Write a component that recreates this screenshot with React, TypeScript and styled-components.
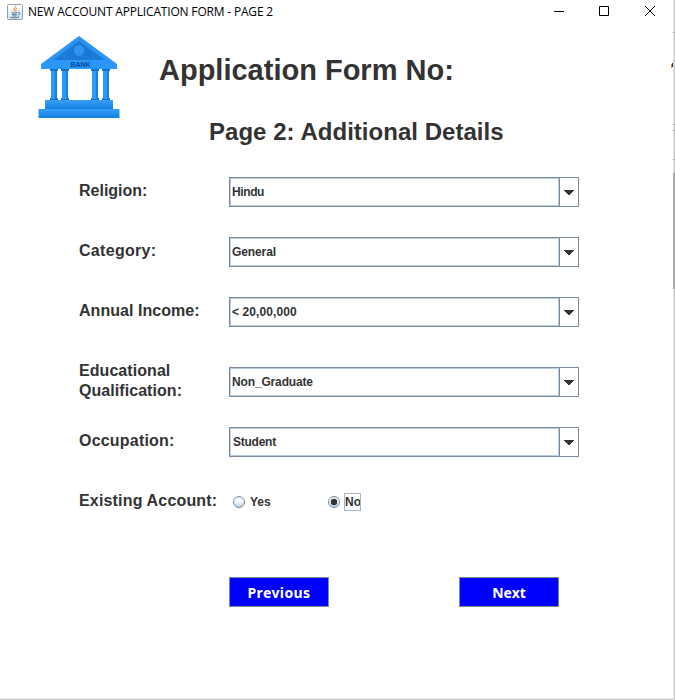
import React, { useState } from "react";
import styled, { createGlobalStyle } from "styled-components";

const GlobalStyle = createGlobalStyle`
  * { box-sizing: border-box; }
  body { margin: 0; background: #fff; overflow: hidden; }
`;

const Window = styled.div`
  position: relative;
  width: 675px;
  height: 700px;
  background: #fff;
  color: #333;
  font-family: "Liberation Sans", Arial, sans-serif;
  font-weight: 700;
  border-bottom: 1px solid #c1c1c1;
  box-shadow: inset 0 -1px #f1f1f1;
`;

const TitleBar = styled.header`
  display: flex;
  align-items: center;
  height: 24px;
  padding-left: 7px;
  color: #000;
`;

const WindowTitle = styled.span`
  margin: 0 auto 0 5px;
  font: 400 12px/16px "Open Sans", "Noto Sans", sans-serif;
  letter-spacing: -0.18px;
  white-space: nowrap;
`;

const WindowControls = styled.svg`
  display: block;
  width: 135px;
  height: 24px;
`;

const Header = styled.div`
  display: flex;
  height: 153px;
  padding-left: 38px;
`;

const Logo = styled.svg`
  flex: none;
  width: 82px;
  height: 83px;
  margin-top: 12px;
`;

const Headings = styled.div`
  margin-left: 39px;
  white-space: nowrap;
`;

const FormNumber = styled.h1`
  margin: 29px 0 0;
  font-size: 29px;
  line-height: 34px;
`;

const PageTitle = styled.h2`
  margin: 31px 0 0 50px;
  font-size: 24px;
  line-height: 28px;
  letter-spacing: 0.03px;
`;

const Form = styled.form`
  padding-left: 79px;
`;

const Row = styled.div<{ $gap?: number }>`
  display: grid;
  grid-template: 30px / 150px 350px;
  align-items: center;
  height: 30px;
  margin-bottom: ${(p) => p.$gap ?? 30}px;
`;

const Label = styled.span<{ $spacing?: number }>`
  font-size: 16px;
  line-height: 20px;
  letter-spacing: ${(p) => p.$spacing ?? 0.08}px;
  white-space: pre-line;
  margin-top: -2px;
`;

const Combo = styled.div`
  display: grid;
  grid-template-columns: 1fr 19px;
  height: 30px;
  border: 1px solid #7a8a99;
`;

const ComboValue = styled.div<{ $spacing: number; $inset: number }>`
  display: flex;
  align-items: center;
  padding-left: ${(p) => p.$inset}px;
  border: 1px solid #b8cfe5;
  font-size: 12px;
  letter-spacing: ${(p) => p.$spacing}px;
`;

const ComboButton = styled.div`
  display: flex;
  justify-content: center;
  border-left: 1px solid #7a8a99;
`;

const Arrow = styled.svg`
  width: 10px;
  height: 5px;
  margin-top: 12px;
`;

const RadioGroup = styled.div`
  display: flex;
  padding: 0 0 0 4px;
`;

const Radio = styled.div`
  display: flex;
  align-items: center;
  width: 95px;
  font-size: 12px;
  cursor: default;
`;

const RadioMark = styled.svg`
  width: 12px;
  height: 12px;
`;

const RadioText = styled.span<{ $focused: boolean }>`
  height: 18px;
  margin-left: 4px;
  line-height: 19px;
  outline: ${(p) => (p.$focused ? "1px solid #a3b8cc" : "none")};
  outline-offset: -1px;
  width: ${(p) => (p.$focused ? "17px" : "auto")};
  padding-left: 1px;
`;

const Actions = styled.div`
  display: flex;
  gap: 130px;
  padding: 30px 0 0 150px;
`;

const ActionButton = styled.button<{ $spacing: number }>`
  width: 100px;
  height: 30px;
  padding: 1px 0 0;
  border: 1px solid #7a8a99;
  background: #00f;
  color: #fff;
  font: 700 14px/18px "Noto Sans", sans-serif;
  letter-spacing: ${(p) => p.$spacing}px;
`;

const EdgeStrip = styled.svg`
  position: absolute;
  top: 0;
  right: 0;
  width: 5px;
  height: 700px;
`;

function JavaIcon() {
  return (
    <svg width="16" height="16" viewBox="0 0 16 16" fill="none">
      <defs>
        <linearGradient id="tile" x2="0" y2="1">
          <stop stopColor="#fff" />
          <stop offset="1" stopColor="#d5e0ea" />
        </linearGradient>
      </defs>
      <rect x=".5" y=".5" width="15" height="15" rx="1" fill="url(#tile)" stroke="#8ba0b3" />
      <path d="M8.6 1.8c1 1.6-2.5 2.5-1.8 4 .3.7.9 1 .7 1.8M10 4c-1.8.9-1.7 1.8-1.1 2.6.3.5 0 1-.4 1.2" stroke="#e4893c" />
      <path d="M4.7 8.5c1.3.7 4.2.7 5.5 0M5 10.2c1.3.5 3.3.5 4.9 0M5.5 11.8c1.3.4 2.7.4 4 0M3.2 13.1c2.5 1 6.5 1 8.9-.3M11 8.4c2.6-.4 2.2 2.2-.1 2.7" stroke="#416f94" strokeWidth=".95" />
    </svg>
  );
}

function BankLogo() {
  return (
    <Logo viewBox="0 0 82 83">
      <defs>
        <linearGradient id="blue" x2="0" y2="1">
          <stop stopColor="#2f91ee" />
          <stop offset="1" stopColor="#2a98fc" />
        </linearGradient>
        <linearGradient id="base" x2="0" y2="1">
          <stop stopColor="#36a0fb" />
          <stop offset="1" stopColor="#1680df" />
        </linearGradient>
      </defs>
      <path d="M41 0 79 28v5H3v-5Z" fill="url(#blue)" />
      <path d="M41 5 67 24H15Z" fill="#1d79d6" />
      <circle cx="41" cy="14.5" r="5.2" fill="#3294f2" />
      <text x="42.5" y="31" textAnchor="middle" fontSize="7" fontWeight="700" fill="#064894" textLength="20">BANK</text>
      {[13, 24, 54, 65].map((x) => (
        <g key={x}>
          <path d={`M${x - 1} 33h8v2h-8zM${x - 1} 62h8v2h-8z`} fill="#1671cc" />
          <path d={`M${x} 35h6v28h-6z`} fill="#299afc" />
          <path d={`M${x + 4} 35h2v28h-2z`} fill="#1c7fe0" />
        </g>
      ))}
      <path d="M7 64h68v9H7z" fill="url(#base)" />
      <path d="M.5 73h81v9H.5z" fill="url(#base)" />
    </Logo>
  );
}

const FIELDS = [
  { label: "Religion:", value: "Hindu", spacing: -0.4, inset: 1, labelSpacing: 0 },
  { label: "Category:", value: "General", spacing: -0.1, inset: 1, labelSpacing: 0.3 },
  { label: "Annual Income:", value: "< 20,00,000", spacing: 0.1, inset: 1, gap: 40, labelSpacing: 0.04 },
  { label: "Educational\nQualification:", value: "Non_Graduate", spacing: -0.15, inset: 1, labelSpacing: 0.06 },
  { label: "Occupation:", value: "Student", spacing: -0.25, inset: 2, labelSpacing: 0.2 },
];

export default function App() {
  const [account, setAccount] = useState("No");

  return (
    <>
      <GlobalStyle />
      <Window>
        <TitleBar>
          <JavaIcon />
          <WindowTitle>NEW ACCOUNT APPLICATION FORM - PAGE 2</WindowTitle>
          <WindowControls viewBox="0 0 135 24" fill="none" stroke="#000">
            <path d="M14 11.5h10M59.5 6.5h9v9h-9zM105 6l10 10M115 6l-10 10" />
          </WindowControls>
        </TitleBar>
        <Header>
          <BankLogo />
          <Headings>
            <FormNumber>Application Form No:</FormNumber>
            <PageTitle>Page 2: Additional Details</PageTitle>
          </Headings>
        </Header>
        <Form>
          {FIELDS.map((f) => (
            <Row key={f.label} $gap={f.gap}>
              <Label $spacing={f.labelSpacing}>{f.label}</Label>
              <Combo>
                <ComboValue $spacing={f.spacing} $inset={f.inset}>{f.value}</ComboValue>
                <ComboButton>
                  <Arrow viewBox="0 0 10 5" shapeRendering="crispEdges">
                    <path d="M0 0h10v1H9v1H8v1H7v1H6v1H4V4H3V3H2V2H1V1H0z" fill="#333" />
                  </Arrow>
                </ComboButton>
              </Combo>
            </Row>
          ))}
          <Row>
            <Label $spacing={0.17}>Existing Account:</Label>
            <RadioGroup>
              {["Yes", "No"].map((option) => (
                <Radio key={option} onClick={() => setAccount(option)}>
                  <RadioMark viewBox="0 0 12 12">
                    <defs>
                      <linearGradient id="dial" x2="0" y2="1">
                        <stop stopColor="#e5edf5" />
                        <stop offset=".35" stopColor="#fff" />
                        <stop offset="1" stopColor="#b8cfe5" />
                      </linearGradient>
                    </defs>
                    <circle cx="6" cy="6" r="5.5" fill="url(#dial)" stroke="#7a8a99" />
                    {account === option && <circle cx="6" cy="6" r="3.2" fill="#333" />}
                  </RadioMark>
                  <RadioText $focused={account === option}>{option}</RadioText>
                </Radio>
              ))}
            </RadioGroup>
          </Row>
          <Actions>
            <ActionButton type="button" $spacing={0.4}>Previous</ActionButton>
            <ActionButton type="button" $spacing={0}>Next</ActionButton>
          </Actions>
        </Form>
        <EdgeStrip viewBox="0 0 5 700" shapeRendering="crispEdges">
          <path d="M3 0h1v700H3z" fill="#e3e3e3" />
          <path d="M4 0h1v700H4z" fill="#c9c9c9" />
          <path d="M3 173h2v116H3z" fill="#ababab" />
          <path d="M3 32h2v1H3zM3 124h2v1H3zM3 130h2v1H3zM3 159h2v1H3z" fill="#aaa" />
          <path d="M1 64h1v4H1z" fill="#c98250" />
          <path d="M2 63h1v4H2z" fill="#222b45" />
        </EdgeStrip>
      </Window>
    </>
  );
}
